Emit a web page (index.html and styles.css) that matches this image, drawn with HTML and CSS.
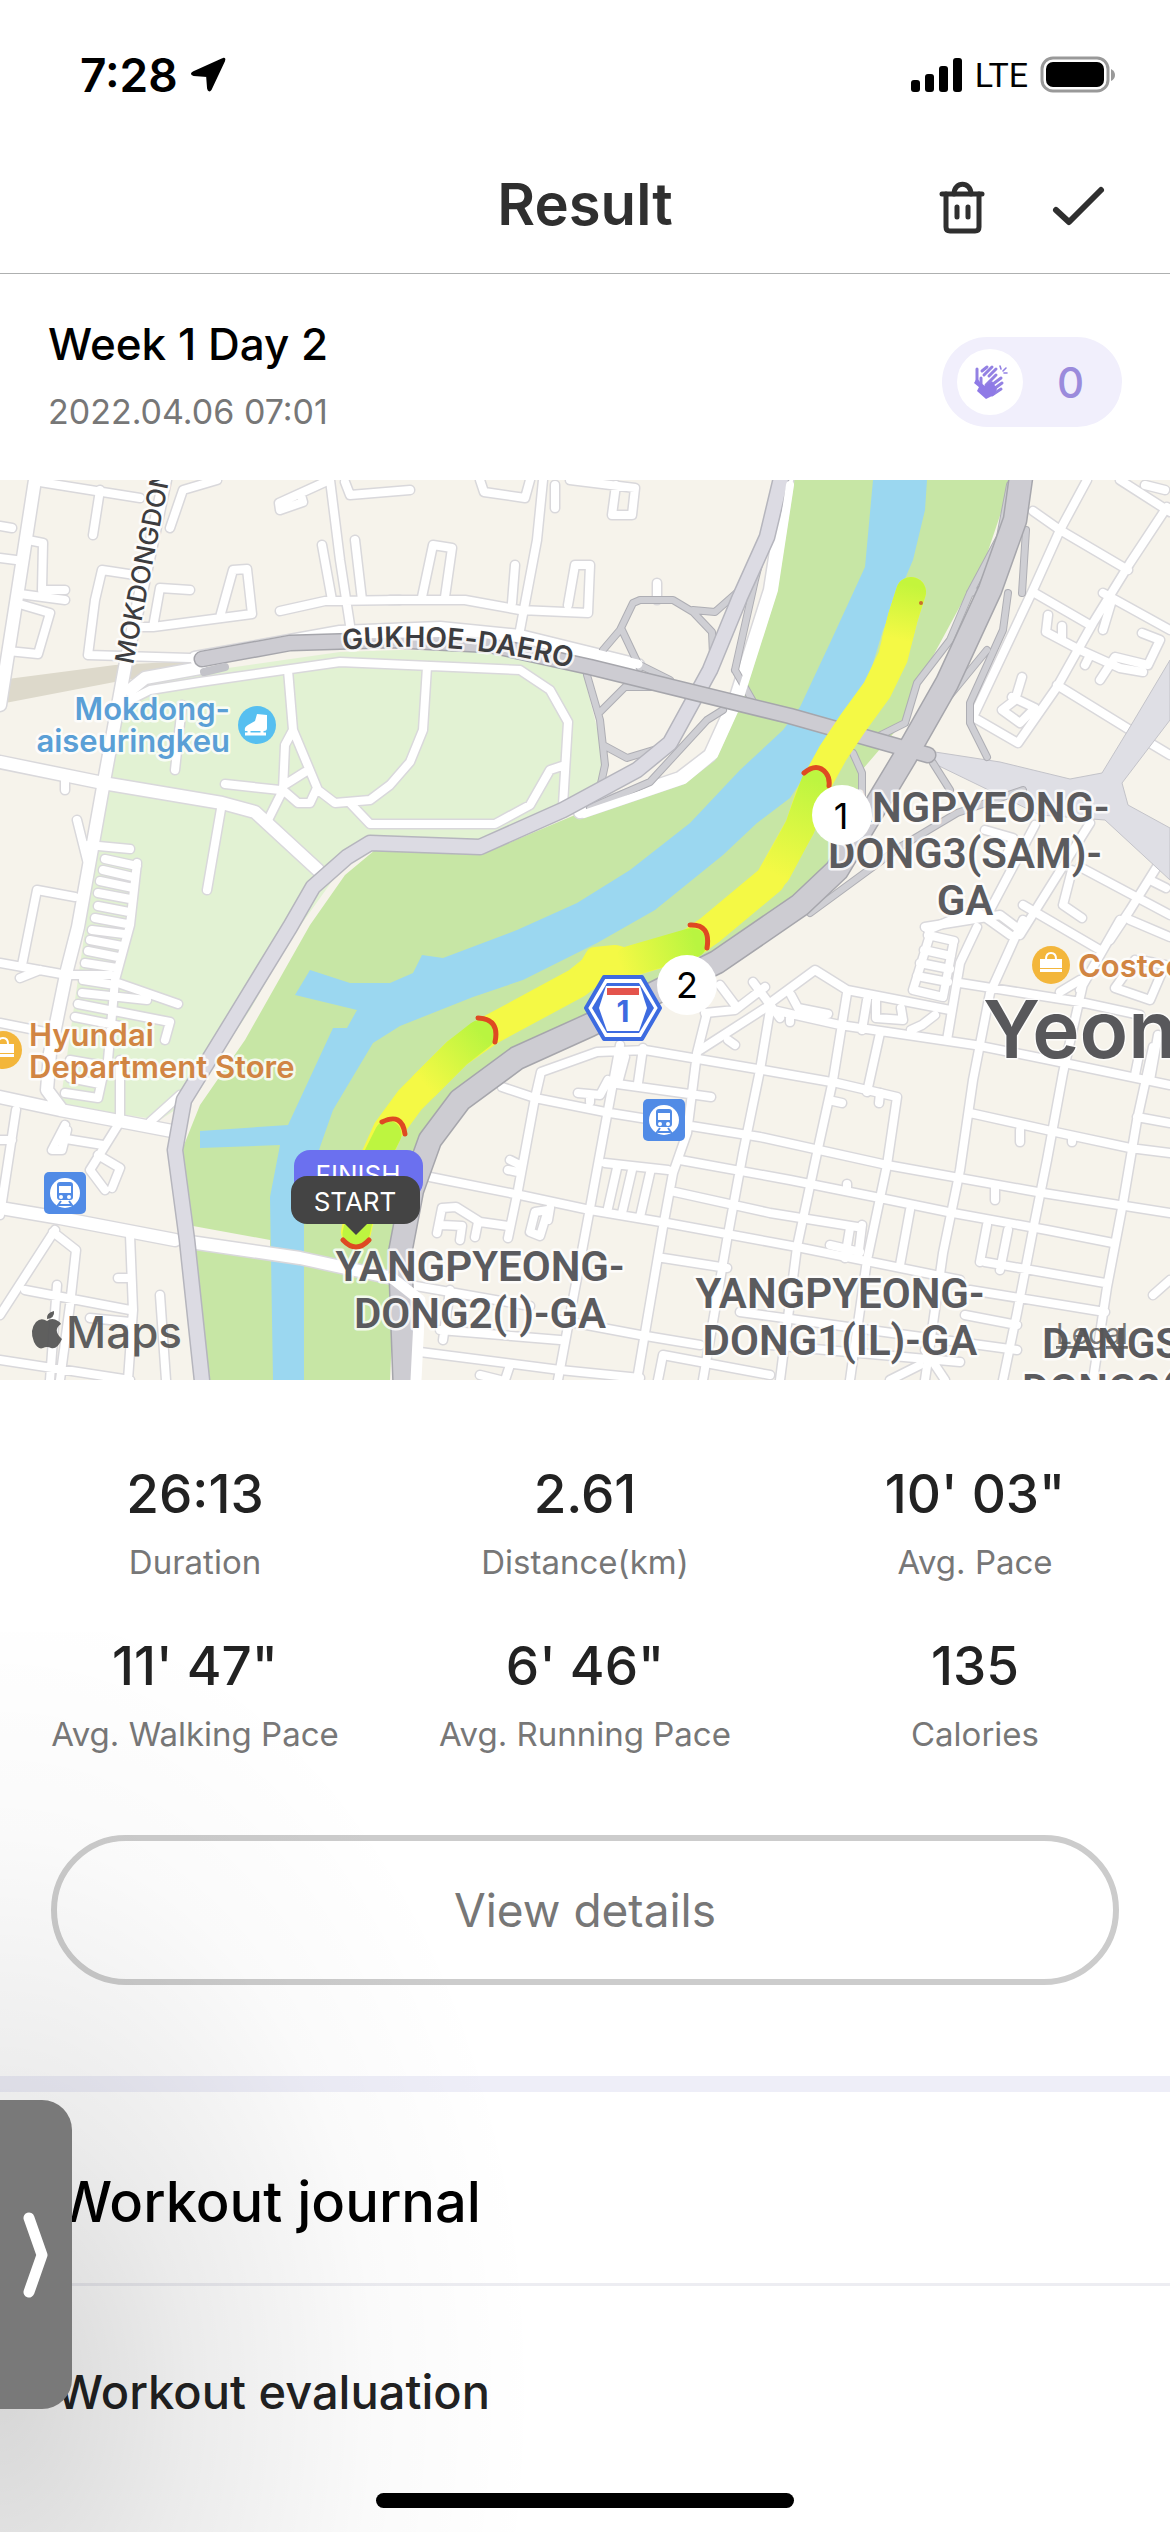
FILE: index.html
```html
<!DOCTYPE html>
<html lang="en">
<head>
<meta charset="utf-8">
<meta name="viewport" content="width=device-width, initial-scale=1">
<title>Result</title>
<link rel="stylesheet" href="styles.css">
</head>
<body>
<div class="screen">
  <div class="status">
    <div class="status-side">
      <span class="clock">7:28</span>
      <svg class="ic-loc" viewBox="0 0 38 38" aria-hidden="true"><path d="M35 2 Q37 1 36 4 L22 34 Q20 37 19 33 L18 20 L4 19 Q0 18 4 16Z" fill="#000" stroke="#000" stroke-width="2" stroke-linejoin="round"/></svg>
    </div>
    <div class="status-side">
      <svg class="ic-signal" viewBox="0 0 52 36" aria-hidden="true"><rect x="0" y="23" width="9" height="12" rx="3"/><rect x="14" y="17" width="9" height="18" rx="3"/><rect x="28" y="9" width="9" height="26" rx="3"/><rect x="42" y="1" width="9" height="34" rx="3"/></svg>
      <span class="network">LTE</span>
      <svg class="ic-batt" viewBox="0 0 76 38" aria-hidden="true"><rect x="2" y="2" width="66" height="33" rx="11" fill="none" stroke="#999" stroke-width="3"/><rect x="6" y="6" width="58" height="25" rx="7"/><path d="M71 13 Q75 15 75 19 Q75 23 71 25Z" fill="#999"/></svg>
    </div>
  </div>

  <header class="topbar">
    <h1>Result</h1>
    <div class="actions">
      <button type="button" class="icon-btn" aria-label="Delete"><svg viewBox="0 0 48 56"><g fill="none" stroke="#2f2f2f" stroke-width="5" stroke-linecap="round" stroke-linejoin="round"><path d="M4 15 H44"/><path d="M16 15 C16 2 33 2 33 15"/><path d="M8 15 V48 Q8 52 12 52 H37 Q41 52 41 48 V15"/><path d="M19 28 V38 M30 28 V38"/></g></svg></button>
      <button type="button" class="icon-btn" aria-label="Done"><svg viewBox="0 0 56 56"><path d="M6 31 L19 43 L51 11" fill="none" stroke="#2f2f2f" stroke-width="6" stroke-linecap="round" stroke-linejoin="round"/></svg></button>
    </div>
  </header>

  <section class="summary">
    <div class="summary-text">
      <h2>Week 1 Day 2</h2>
      <p>2022.04.06 07:01</p>
    </div>
    <button type="button" class="claps" aria-label="Claps">
      <span class="clap-dot"><svg viewBox="0 0 36 36"><g stroke="#9381e3" stroke-linecap="round" fill="none"><path stroke-width="3" d="M5 5V18M10 7L15 3M12 11L20 3M17 12L24 5M9 14V24M14 21L24 11M17 23L29 14M19 27L30 19M20 31L29 25"/><path stroke-width="1.6" d="M28 2 L29 5 M34 4 L31 7 M35 9 L32 9"/></g><path d="M2 19 L5 14 L8 18 V24Z M5 27 L9 19 L13 22 L20 17 L25 25 L22 31 L14 35Z" fill="#8f7ae6"/></svg></span>
      <span class="clap-count">0</span>
    </button>
  </section>

  <svg class="map" viewBox="0 480 1170 900" role="img" aria-label="Route map">
    <defs>
      <path id="arc-gukhoe" d="M343 650 Q475 636 620 682"/>
      <linearGradient id="gA" gradientUnits="userSpaceOnUse" x1="912" y1="585" x2="900" y2="640"><stop offset="0" stop-color="#c4f53c"/><stop offset="1" stop-color="#f4f945"/></linearGradient>
      <linearGradient id="gB" gradientUnits="userSpaceOnUse" x1="817" y1="780" x2="776" y2="875"><stop offset="0" stop-color="#bdf540"/><stop offset="1" stop-color="#f4f945"/></linearGradient>
      <linearGradient id="gC" gradientUnits="userSpaceOnUse" x1="695" y1="940" x2="620" y2="965"><stop offset="0" stop-color="#b9f540"/><stop offset="1" stop-color="#f4f945"/></linearGradient>
      <linearGradient id="gD" gradientUnits="userSpaceOnUse" x1="482" y1="1033" x2="425" y2="1085"><stop offset="0" stop-color="#b9f540"/><stop offset="1" stop-color="#f4f945"/></linearGradient>
      <g id="minor">
        <path d="M40 482L140 498M100 490L93 535M217 480L183 490L170 528M0 526L12 528M0 558L16 560M28 540L43 543L42 590L65 590M20 594L65 600M16 603L50 613L38 654L8 651M135 575L102 570L95 600L88 655L190 658M190 590L160 588L153 627L252 614L247 569L233 570L220 617M140 627H153M325 482L279 503L280 510L303 502L301 495M330 480L340 560L350 625M345 482L350 495L410 490M322 545L332 600M355 540L362 600M280 611L325 601L400 600"/>
        <path d="M480 480L484 492L525 498L530 480M543 480L537 540L520 630M555 485V508M570 480L635 488L632 515H612L616 485M390 600H465L520 610L588 613L590 565H575L568 605M422 597L433 545L452 548L445 597M515 565L512 603M657 583V600"/>
        <path d="M130 700L150 690L200 682L340 662L520 670L550 690L568 722L563 805M288 670L293 730L285 745L283 790L268 820M293 730L318 790L335 803L370 800L390 785L410 762L423 730L427 667M283 790L298 803H310L316 790M286 784L305 772M225 784L280 790M350 803L370 824H495L530 805L550 770L565 765M182 705L175 770"/>
        <path d="M222 803L207 890M65 775V790M77 820L87 860M88 845L130 849M137 863L130 925L115 980L108 1060M105 859L137 866M103 870L133 877M100 881L133 888M98 893L130 899M98 906L129 912M95 918L127 924M92 930L124 934M90 940L122 946M88 951L118 957M85 963L117 968M83 980L115 985M82 993L147 1000M78 1004L170 1022L165 1040M75 1017L120 1026M70 1060L105 1066L98 1098L65 1093M70 1078L100 1084M75 897L37 890L22 965M0 963L67 975H110M20 978L40 970M0 1023L50 1033M115 982L178 1004"/>
        <path d="M120 1120V1060M180 1095L150 1122M16 1110L0 1215M0 1140H12M65 1125L52 1150H62L67 1130M60 1138L103 1145M118 1125L90 1170L105 1190M98 1155L120 1168L112 1188M55 1230L0 1315M53 1232L76 1250L70 1305L60 1380M130 1235L133 1310L128 1380M25 1290L130 1310M57 1285L50 1380M160 1295L166 1380M90 1318L130 1322M0 1360L130 1380M118 1278H130"/>
        <path d="M502 1087L535 1098L610 1113L760 1137L887 1165L1043 1193L1170 1213M535 1098L541 1072L597 1052L645 1050L763 1070L837 1083L897 1097L887 1165L867 1260L850 1380M535 1098L518 1190L508 1238M430 1177L520 1195L590 1210L667 1223L797 1247L960 1280M620 1045L608 1110L590 1208L558 1380M707 1013L697 1053L687 1133L673 1173L663 1227L637 1380M770 1010L760 1070L743 1153L727 1240L703 1380M680 1160L790 1180L880 1198L953 1213L1047 1230L1113 1243M675 1192L770 1213L857 1227M663 1258L727 1268M610 1083L711 1097M643 1048L638 1083M625 1057L618 1083M608 1080L600 1095L578 1093M590 1095V1102M605 1163L668 1170M617 1168L608 1208M632 1170L622 1213M650 1173L640 1217M510 1160L520 1165M508 1170L518 1172M437 1233L442 1208L456 1207L480 1222L508 1226M478 1222L475 1237M442 1225L462 1226L460 1240M530 1232L535 1212L548 1210L540 1236ZM550 1208L548 1220"/>
        <path d="M410 1285L530 1306M450 1290L443 1340M560 1320L640 1335L700 1345M420 1352L560 1370L640 1378M510 1365L505 1380M480 1375L500 1380M658 1380L663 1355L770 1375M740 1312L870 1330L1017 1350M440 1330L560 1340"/>
        <path d="M705 1013L735 1010L765 987M700 1050L770 1005M753 982L780 1018M720 985L735 1005M728 1040L735 1045M770 1003L815 970L847 990L950 1010M773 1010L840 1025L975 1045L1050 1060L1170 1085M791 995L798 1008L828 1014M790 1015V1022M847 993L833 1080L817 1153L797 1247L780 1380M880 1033L867 1092M867 1000L862 1030M876 1000V1018L903 1020L901 1008M935 1015L922 1025L911 1030M833 1101L842 1103M880 1093L879 1103M847 1184V1190M850 1228L845 1258M862 1225L858 1258M830 1245L860 1252M910 1210L900 1265"/>
        <path d="M977 927L960 963L947 1040M1023 920L990 993L973 1080L960 1170L943 1253L925 1380M1085 975L1063 1073L1047 1160L1033 1230L1017 1313L1003 1380M1153 1047L1137 1120L1123 1203L1107 1287L1093 1380M970 1113L1060 1133L1130 1148L1170 1153M960 983L1080 1002L1140 1015M1137 1117L1170 1123M1020 1130V1142M1072 1137V1142M995 1188V1200M987 1225L980 1262M1008 1230L1000 1270M985 1262L1105 1283M970 1290L1105 1312M965 1315L1017 1325M1170 1280L1153 1295M1140 1050L1135 1075M1158 1035L1150 1080M1010 935L975 910L928 930M1023 905L1100 950M1120 920L1080 990M1060 992L1080 980M1130 920L1170 937M1140 960L1165 965L1150 1000L1115 988L1135 960"/>
        <path d="M930 935L913 990L943 997L953 945M928 935L954 941M924 950L951 956M920 963L950 969M917 976L948 982M770 1345L960 1362M920 1365L890 1380M925 1350L945 1380"/>
        <path d="M1087 480L1060 530L1033 590L973 717L1018 743L1057 687L1093 623L1130 563L1167 507M1120 480L1170 512M1145 485L1165 490M1033 511L1060 530L1128 570M1033 592L1090 625M1057 685L1130 730M1103 593L1170 630M1048 615L1046 632L1080 650L1120 668L1143 672M1062 626V638M1112 600L1103 630M1142 633L1160 640L1148 665L1115 657L1100 680M1085 665L1090 655M1022 677L1015 700L1002 710L1020 723L1035 708L1012 697"/>
        <path d="M1163 857L1130 910L1110 940M1080 867L1170 915M1150 880L1166 888M1072 870L1063 905L1082 918M1150 743L1170 755M1090 823L1020 935M985 830L1013 838L1005 860M1035 825L990 910M925 927L1000 915L1020 930"/>
      </g>
      <g id="major">
        <path d="M35 480L18 590L0 705M165 480L125 667L103 787L78 927L67 970L50 1053L47 1090L62 1110M0 762L103 783L222 803L255 812L318 870M0 1097L60 1110L130 1123L172 1131M0 1208L60 1218L175 1240M190 1242L300 1258L392 1278"/>
        <path d="M787 480L770 590L735 700L710 755L680 778L580 812M130 690L145 678L200 668M195 658L340 632L440 628L520 636L638 665"/>
      </g>
      <g id="ramps">
        <path d="M603 650L620 630L633 603L640 600L673 600L693 612L712 632L713 655M693 610L715 612L740 590M622 630L640 668M587 675L600 720L605 765L600 788M600 712L625 687H665M603 745L627 758L660 748M723 710L707 720L650 782L590 808M735 670L755 580L775 500M735 670L755 705M640 665L670 680"/>
        <path d="M1010 485L1000 537L970 593L950 640L917 683L905 723L877 737M1026 530L1022 593M1008 593L1003 630L970 703V723L987 757M987 650L950 695M853 753L862 773V800M933 763L950 790M810 913L900 847L957 813L1023 790M970 593L985 590"/>
      </g>
      <g id="train"><rect x="-21" y="-21" width="42" height="42" rx="5" fill="#518be6"/><circle r="15" fill="#fff"/><rect x="-8" y="-11" width="16" height="18" rx="3" fill="#518be6"/><rect x="-6" y="-7" width="12" height="7" fill="#fff"/><circle cx="-4" cy="4" r="2" fill="#fff"/><circle cx="4" cy="4" r="2" fill="#fff"/><path d="M-4 8L-9 15M4 8L9 15M-6 12H6" stroke="#518be6" stroke-width="2"/></g>
      <g id="bag"><circle r="19" fill="#f3b63b"/><rect x="-11" y="-6" width="22" height="9" fill="#fff"/><rect x="-11" y="4" width="22" height="3" fill="#fff"/><path d="M-5-6Q-5-12 0-12Q5-12 5-6" fill="none" stroke="#fff" stroke-width="2"/></g>
    </defs>

    <rect y="480" width="1170" height="900" fill="#f6f3eb"/>
    <path fill="#e2f2d3" d="M125 690L200 672L340 652L400 650L530 652L583 672L605 760L600 790L480 850L370 845L340 870L290 940L250 1010L190 1100L160 1120L60 1105L75 1000L105 790Z"/>
    <path fill="#ddd9cb" d="M0 680L115 665L190 661V672L125 680L0 704Z"/>
    <path fill="#c7e6a5" d="M787 480L770 590L735 700L710 755L680 782L575 815L480 855L375 850L345 875L310 925L245 1040L200 1105L182 1150L193 1240L210 1380H390L395 1270L405 1210L440 1120L500 1060L590 1015L690 970L790 900L850 840L862 770L905 720L920 680L985 560L1012 480Z"/>
    <path fill="#f6f3eb" d="M193 1226L270 1240V1252L193 1238Z"/>
    <path fill="#9bd7f0" d="M873 480L865 567L830 643L800 707L783 730L740 770L690 823L630 870L577 903L517 930L443 958L422 955L413 973L390 983H350L310 970L295 995L357 1010L347 1028H333L288 1125L200 1131V1148L280 1145L270 1197L273 1380H304V1197L320 1147L333 1110L373 1043L400 1026L473 997L523 980L597 943L655 910L723 855L757 823L790 798L820 753L837 723L867 683L883 630L913 560L925 510L927 480Z"/>

    <use href="#minor" class="ln case-minor"/>
    <use href="#major" class="ln case-major"/>
    <use href="#minor" class="ln fill-minor"/>
    <use href="#major" class="ln fill-major"/>
    <path fill="#dfdfe5" stroke="#c3c3c9" stroke-width="1" d="M935 752L1000 762L1070 779L1102 773L1130 727L1170 660V720L1122 783L1128 805L1170 828V880L1105 820L1040 815L935 764Z"/>
    <use href="#ramps" class="ln case-ramp"/>
    <use href="#ramps" class="ln fill-ramp"/>
    <g class="ln">
      <path stroke="#b5b5bd" stroke-width="17" d="M783 470L767 537L740 597L710 670L670 743L637 770L563 810L480 847L370 843L347 857L313 887L290 927L213 1053L184 1100L175 1150L187 1240L203 1390"/>
      <path stroke="#dcdbe3" stroke-width="14" d="M783 470L767 537L740 597L710 670L670 743L637 770L563 810L480 847L370 843L347 857L313 887L290 927L213 1053L184 1100L175 1150L187 1240L203 1390"/>
      <path stroke="#fff" stroke-width="8" d="M790 485L774 590L739 700L714 755L684 780L584 814"/>
      <path stroke="#a6a6ac" stroke-width="25" d="M1022 470L1015 520L990 590L947 683L905 757L887 787L837 870L800 905L717 962L590 1025L517 1058L460 1100L430 1140L412 1190L400 1253L405 1390"/>
      <path stroke="#a6a6ac" stroke-width="17" d="M202 659L290 643L390 640L490 645L590 667L790 716L928 755"/>
      <path stroke="#cdccd2" stroke-width="14" d="M202 659L290 643L390 640L490 645L590 667L790 716L928 755"/>
      <path stroke="#cdccd2" stroke-width="22" d="M1022 470L1015 520L990 590L947 683L905 757L887 787L837 870L800 905L717 962L590 1025L517 1058L460 1100L430 1140L412 1190L400 1253L405 1390"/>
      <path stroke="#fff" stroke-width="9" d="M350 634L470 632L540 640L638 664"/>
      <path stroke="#c3c3c9" stroke-width="8" d="M204 672L225 667"/>
      <path stroke="#fff" stroke-width="11" d="M392 1278L420 1300L416 1380"/>
    </g>

    <g class="place">
      <text class="street" transform="rotate(-79 133 665)" x="133" y="665">MOKDONGDONG-RO</text>
      <text class="street strong"><textPath href="#arc-gukhoe">GUKHOE-DAERO</textPath></text>
      <text class="poi blue" x="230" y="720" text-anchor="end">Mokdong-</text>
      <text class="poi blue" x="230" y="752" text-anchor="end">aiseuringkeu</text>
      <text class="poi orange" x="29" y="1046">Hyundai</text>
      <text class="poi orange" x="29" y="1078">Department Store</text>
      <text class="poi orange" x="1078" y="977">Costco</text>
      <g class="dong">
        <text x="965" y="822">YANGPYEONG-</text><text x="965" y="868">DONG3(SAM)-</text><text x="965" y="915">GA</text>
        <text x="480" y="1281">YANGPYEONG-</text><text x="480" y="1328">DONG2(I)-GA</text>
        <text x="840" y="1308">YANGPYEONG-</text><text x="840" y="1355">DONG1(IL)-GA</text>
        <text x="1148" y="1358">DANGSAN-</text><text x="1148" y="1404">DONG2(I)-GA</text>
      </g>
      <text class="gu" x="983" y="1058">Yeongdeungpo</text>
    </g>
    <circle cx="257" cy="725" r="19" fill="#56bff0"/>
    <path d="M257 714L267 715V728Q267 731 264 731H245Q244 727 248 725L255 721Z" fill="#fff"/><path d="M245 734H266M249 730V734M262 730V734" stroke="#fff" stroke-width="3"/>
    <use href="#bag" x="3" y="1050"/><use href="#bag" x="1051" y="965"/>
    <use href="#train" x="65" y="1193"/><use href="#train" x="664" y="1120"/>

    <g class="ln" stroke="#f4f945" stroke-width="30">
      <path d="M911 592L903 617L893 657L877 690L853 723L833 753L817 782L810 797L800 827L770 880L710 930L690 944L630 962L597 967L577 983L490 1030L457 1053L410 1100L388 1130L370 1170L356 1232"/>
      <path stroke-width="20" d="M580 983L595 957L615 955L640 962"/>
      <path stroke="url(#gA)" d="M911 592L903 617L897 640"/>
      <path stroke="url(#gB)" d="M816 783L806 810L800 827L776 872"/>
      <path stroke="url(#gC)" d="M692 943L630 961"/>
      <path stroke="url(#gD)" d="M480 1035L457 1053L425 1085"/>
      <path stroke="#bdf540" stroke-width="27" d="M388 1134L370 1170L356 1234"/>
    </g>
    <path class="ln" stroke="#de4a22" stroke-width="5" d="M804 773Q817 762 826 773Q830 778 829 786M690 925Q711 924 707 948M478 1018Q500 1019 495 1042M382 1122Q402 1112 405 1134M343 1240Q356 1254 369 1240"/>
    <circle cx="921" cy="603" r="2" fill="#c9702c"/>

    <g transform="translate(623 1008)">
      <path d="M-37 0L-19-31H19L37 0L19 31H-19Z" fill="#fff" stroke="#3d6be0" stroke-width="4" stroke-linejoin="round"/>
      <path d="M-31 0L-16-25H16L31 0L16 25H-16Z" fill="#3d6be0"/>
      <path d="M-24 0L-17-22H17L24 0L16 23H-16Z" fill="#fff"/>
      <rect x="-16" y="-20" width="32" height="7" fill="#e4544c"/>
      <text class="shield" y="14">1</text>
    </g>
    <g class="pin">
      <circle cx="842" cy="815" r="30" fill="#fff"/><text x="841" y="829">1</text>
      <circle cx="687" cy="985" r="30" fill="#fff"/><text x="687" y="998">2</text>
    </g>
    <g class="tag">
      <rect x="294" y="1150" width="129" height="48" rx="16" fill="#6b70ef"/><text x="358" y="1184">FINISH</text>
      <path d="M343 1222H369L356 1235Z" fill="#444"/>
      <rect x="291" y="1176" width="129" height="48" rx="16" fill="#444"/><text x="355" y="1211">START</text>
    </g>
    <g fill="#555" fill-opacity=".94">
      <path d="M47 1321Q52 1317 58 1321Q60 1322 61 1324Q52 1330 62 1339Q57 1350 51 1348Q47 1346 43 1348Q38 1350 34 1342Q29 1330 36 1322Q41 1317 47 1321ZM47 1319Q46 1313 54 1311Q55 1318 47 1319Z"/>
      <text class="brand" x="66" y="1348">Maps</text>
    </g>
    <a href="#legal"><text class="legal" x="1056" y="1344">Legal</text></a>
  </svg>

  <dl class="stats">
    <div><dd>26:13</dd><dt>Duration</dt></div>
    <div><dd>2.61</dd><dt>Distance(km)</dt></div>
    <div><dd>10' 03"</dd><dt>Avg. Pace</dt></div>
    <div><dd>11' 47"</dd><dt>Avg. Walking Pace</dt></div>
    <div><dd>6' 46"</dd><dt>Avg. Running Pace</dt></div>
    <div><dd>135</dd><dt>Calories</dt></div>
  </dl>
  <div class="details"><button type="button">View details</button></div>

  <section class="journal">
    <h2>Workout journal</h2>
    <h3>Workout evaluation</h3>
  </section>

  <div class="shade"></div>
  <button type="button" class="handle" aria-label="Open panel"><svg viewBox="0 0 36 90"><path d="M11 8L24 45L11 82" fill="none" stroke="#fff" stroke-width="11" stroke-linecap="round" stroke-linejoin="round"/></svg></button>
  <div class="home-bar"></div>
</div>
</body>
</html>
```
FILE: styles.css
```css
* { box-sizing: border-box; }
body { margin: 0; background: #fff; font-family: Inter, "Liberation Sans", sans-serif; color: #000; }
h1, h2, h3, p, dl, dd { margin: 0; }
h1, h2, h3, dd { font-weight: 500; }
button { font: inherit; border: 0; padding: 0; background: none; cursor: pointer; }
.screen { position: relative; min-height: 100vh; overflow: hidden; }

.status { display: flex; justify-content: space-between; align-items: center; padding: 47px 54px 0 80px; }
.status-side { display: flex; align-items: center; gap: 12px; height: 56px; }
.clock { font-size: 46px; font-weight: 600; }
.network { font-size: 34px; font-family: Roboto, sans-serif; font-weight: 400; }
.ic-loc { width: 36px; height: 36px; }
.ic-signal { width: 52px; height: 36px; }
.ic-batt { width: 76px; height: 38px; }

.topbar { display: grid; grid-template-columns: 1fr auto 1fr; align-items: center; padding: 65px 64px 33px; border-bottom: 1px solid #aeb0b0; }
.topbar h1 { grid-column: 2; font-size: 58px; line-height: 72px; font-weight: 600; color: #2f2f2f; }
.actions { display: flex; justify-content: flex-end; gap: 64px; padding-top: 6px; }
.icon-btn { display: flex; }
.icon-btn svg { height: 56px; display: block; }

.summary { display: flex; justify-content: space-between; align-items: center; padding: 42px 48px 48px; }
.summary h2 { font-size: 44px; line-height: 56px; margin-bottom: 20px; }
.summary p { font-size: 34px; line-height: 40px; color: #777; }
.claps { display: flex; align-items: center; width: 180px; height: 90px; padding: 0 38px 0 15px; justify-content: space-between; border-radius: 45px; background: #f1effc; margin-top: 16px; }
.clap-dot { display: grid; place-items: center; width: 66px; height: 66px; border-radius: 50%; background: #fff; }
.clap-dot svg { width: 36px; height: 36px; }
.clap-count { font-size: 42px; font-weight: 500; color: #9b8bdc; }

.map { display: block; width: 100%; height: auto; }
.ln { fill: none; stroke-linecap: round; stroke-linejoin: round; }
.case-minor { stroke: #d9d8db; stroke-width: 11px; }
.fill-minor { stroke: #fff; stroke-width: 8px; }
.case-major { stroke: #d9d8db; stroke-width: 15px; }
.fill-major { stroke: #fff; stroke-width: 12px; }
.case-ramp { stroke: #aeaeb4; stroke-width: 8px; }
.fill-ramp { stroke: #cfcfd4; stroke-width: 6px; }
.place text { paint-order: stroke; stroke: #fff; stroke-opacity: .8; stroke-width: 5px; stroke-linejoin: round; }
.street { font-size: 26px; font-weight: 500; fill: #3d3d40; }
.strong { font-size: 28px; font-weight: 600; }
.poi { font-size: 31px; font-weight: 600; }
.blue { fill: #5a9fd6; }
.orange { fill: #d18543; }
.dong { font-family: Roboto, sans-serif; font-size: 42px; font-weight: 600; fill: #5b5b5e; text-anchor: middle; }
.place .gu { font-size: 80px; font-weight: 600; fill: #58585b; stroke-width: 3px; }
.shield { font-size: 30px; font-weight: 700; fill: #3d6be0; text-anchor: middle; }
.pin { font-size: 36px; text-anchor: middle; }
.tag text { font-size: 26px; fill: #fff; text-anchor: middle; }
.brand { font-size: 44px; font-weight: 500; }
.legal { font-size: 28px; fill: #555; fill-opacity: .8; text-decoration: underline; }

.stats { display: grid; grid-template-columns: repeat(3, 1fr); row-gap: 52px; padding-top: 82px; text-align: center; }
.stats div { display: flex; flex-direction: column; gap: 16px; }
.stats dd { font-size: 53px; line-height: 64px; color: #222; }
.stats dt { font-size: 33px; line-height: 40px; color: #777; }
.details { padding: 81px 51px 91px; }
.details button { width: 100%; height: 150px; border: 6px solid #ccc; border-radius: 75px; font-size: 46px; color: #777; }

.journal { border-top: 16px solid #eeeef8; padding-bottom: 112px; }
.journal h2 { padding: 74px 56px 45px; font-size: 56px; line-height: 72px; border-bottom: 3px solid #ededf2; }
.journal h3 { padding: 78px 56px 0; font-size: 47px; line-height: 56px; color: #222; }

.shade { position: absolute; left: 0; bottom: 0; width: 50%; height: 900px; pointer-events: none; background: radial-gradient(ellipse 540px 800px at 0 760px, rgba(0,0,0,.16), rgba(0,0,0,.08) 35%, rgba(0,0,0,.02) 70%, rgba(0,0,0,0)); }
.handle { position: absolute; left: 0; bottom: 123px; width: 72px; height: 309px; border-radius: 0 30px 30px 0; background: #797979; display: grid; place-items: center; }
.handle svg { width: 36px; height: 90px; }
.home-bar { position: absolute; left: 50%; bottom: 24px; width: 418px; height: 15px; margin-left: -209px; border-radius: 8px; background: #000; }
```
